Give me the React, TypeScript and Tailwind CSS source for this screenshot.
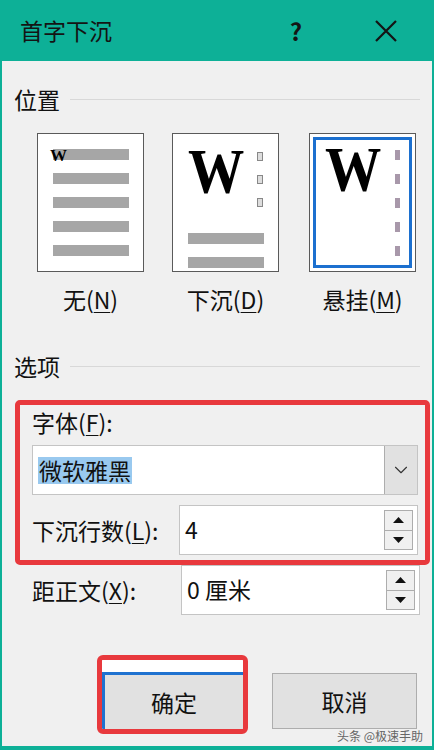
import { ChevronDown } from 'lucide-react';

const cjk = "font-['Noto_Sans_CJK_SC',sans-serif]";

function SectionHeader({ title }: { title: string }) {
  return (
    <div className="flex items-center h-[24px]">
      <span className="text-[23px] leading-[24px] text-[#111]">{title}</span>
      <div className="flex-1 h-px bg-[#d8d8d8] ml-[10px] mr-[12px]" />
    </div>
  );
}

function Bar({ className = '' }: { className?: string }) {
  return <div className={`h-[11px] w-[76px] bg-[#a6a6a6] ${className}`} />;
}

// big serif drop-cap drawn in the preview boxes
function BigW() {
  return (
    <div className="w-[56px] h-[44px] overflow-visible">
      <span className="block font-['Liberation_Serif',serif] font-bold text-[64px] leading-[40px] scale-x-[0.88] origin-left text-black">
        W
      </span>
    </div>
  );
}

function SpinButtons() {
  return (
    <div className="flex flex-col w-[29px] my-[4px] mr-[4px]">
      <div className="flex-1 border border-[#adadad] bg-[#f0f0f0] flex items-center justify-center">
        <svg width="11" height="6" viewBox="0 0 11 6">
          <path d="M0 6 L5.5 0 L11 6 Z" fill="#111" />
        </svg>
      </div>
      <div className="flex-1 border border-t-0 border-[#adadad] bg-[#f0f0f0] flex items-center justify-center">
        <svg width="11" height="6" viewBox="0 0 11 6">
          <path d="M0 0 L5.5 6 L11 0 Z" fill="#111" />
        </svg>
      </div>
    </div>
  );
}

function SpinBox({ value }: { value: string }) {
  return (
    <div className="w-[239px] h-[50px] bg-white border border-[#c4c4c4] flex">
      <div className="flex-1 pl-[5px] text-[23px] leading-[46px] text-[#111]">{value}</div>
      <SpinButtons />
    </div>
  );
}

function Underlined({ children }: { children: string }) {
  return <span className="underline underline-offset-[3px] decoration-1">{children}</span>;
}

export default function App() {
  return (
    <div className={`w-[434px] h-[750px] bg-[#0db097] flex flex-col px-[2px] pb-[4px] ${cjk}`}>
      {/* title bar */}
      <div className="h-[61px] flex items-center pl-[18px] text-[#141414]">
        <span className="text-[23px] leading-none">首字下沉</span>
        <span className="ml-auto mr-[72px] text-[24px] font-bold leading-none">?</span>
        <svg width="24" height="24" viewBox="0 0 24 24" className="mr-[34px]">
          <path d="M2 2 L22 22 M22 2 L2 22" stroke="#141414" strokeWidth="2.2" />
        </svg>
      </div>

      <div className="flex-1 bg-[#f0f0f0] flex flex-col pl-[12px] relative">
        <div className="mt-[26px]">
          <SectionHeader title="位置" />
        </div>

        {/* position choices */}
        <div className="flex gap-[28px] ml-[23px] mt-[22px]">
          <div className="w-[107px] h-[139px] border border-[#5a5a5a] bg-white flex flex-col gap-[13px] pt-[15px] pl-[15px]">
            <div className="relative">
              <Bar />
              <span className="absolute left-[-3px] top-[-2px] font-['Liberation_Serif',serif] font-bold text-[17px] leading-none text-black">
                W
              </span>
            </div>
            <Bar />
            <Bar />
            <Bar />
            <Bar />
          </div>

          <div className="w-[107px] h-[139px] border border-[#5a5a5a] bg-white flex flex-col pl-[15px] pt-[18px]">
            <div className="flex">
              <BigW />
              <div className="flex flex-col gap-[14px] ml-[13px] pt-[0px]">
                <div className="w-[6px] h-[9px] border border-[#888] bg-[#ddd]" />
                <div className="w-[6px] h-[9px] border border-[#888] bg-[#ddd]" />
                <div className="w-[6px] h-[9px] border border-[#888] bg-[#ddd]" />
              </div>
            </div>
            <Bar className="mt-[26px]" />
            <Bar className="mt-[13px]" />
          </div>

          <div className="w-[107px] h-[139px] border border-[#5a5a5a] bg-white p-[3px] ml-[2px]">
            <div className="w-full h-full border-[3px] border-[#1c70cf] flex pl-[9px] pt-[10px]">
              <BigW />
              <div className="flex flex-col gap-[14px] ml-[14px] pt-[0px]">
                <div className="w-[5px] h-[10px] bg-[#a898aa]" />
                <div className="w-[5px] h-[10px] bg-[#a898aa]" />
                <div className="w-[5px] h-[10px] bg-[#a898aa]" />
                <div className="w-[5px] h-[10px] bg-[#a898aa]" />
                <div className="w-[5px] h-[10px] bg-[#a898aa]" />
              </div>
            </div>
          </div>
        </div>

        <div className="flex ml-[23px] mt-[14px] text-[23px] leading-[26px] text-[#111]">
          <div className="w-[107px] text-center">
            无(<Underlined>N</Underlined>)
          </div>
          <div className="w-[107px] ml-[28px] text-center">
            下沉(<Underlined>D</Underlined>)
          </div>
          <div className="w-[107px] ml-[30px] text-center">
            悬挂(<Underlined>M</Underlined>)
          </div>
        </div>

        <div className="mt-[42px]">
          <SectionHeader title="选项" />
        </div>

        {/* highlighted font settings */}
        <div className="mt-[22px] ml-[1px] w-[415px] border-[5px] border-[#e8393d] rounded-[5px] flex flex-col pl-[12px] pr-[7px] pb-[5px]">
          <div className="mt-[5px] h-[24px] text-[23px] leading-[24px] text-[#111]">
            字体(<Underlined>F</Underlined>):
          </div>
          <div className="mt-[11px] h-[50px] bg-white border border-[#c4c4c4] flex">
            <div className="flex-1 flex items-center pl-[5px]">
              <span className="bg-[#99c9ef] text-[23px] leading-[27px] px-px text-[#111]">微软雅黑</span>
            </div>
            <div className="w-[33px] bg-[#e1e1e1] border-l border-[#adadad] flex items-center justify-center">
              <ChevronDown size={22} strokeWidth={1.2} color="#333" />
            </div>
          </div>
          <div className="mt-[10px] flex items-center">
            <span className="text-[23px] leading-[24px] text-[#111]">
              下沉行数(<Underlined>L</Underlined>):
            </span>
            <div className="ml-auto">
              <SpinBox value="4" />
            </div>
          </div>
        </div>

        <div className="flex items-center pl-[18px] pr-[12px]">
          <span className="text-[23px] leading-[24px] text-[#111]">
            距正文(<Underlined>X</Underlined>):
          </span>
          <div className="ml-auto">
            <SpinBox value="0 厘米" />
          </div>
        </div>

        {/* buttons */}
        <div className="flex items-start mt-[40px] ml-[83px]">
          <div className="w-[151px] h-[79px] border-[5px] border-[#e8393d] rounded-[6px] flex flex-col overflow-hidden">
            <div className="h-[12px] bg-white" />
            <div className="flex-1 bg-[#e1e1e1] border-t-[3px] border-l-[3px] border-[#1f72d0] flex items-center justify-center text-[23px] text-[#111]">
              确定
            </div>
          </div>
          <div className="w-[145px] h-[56px] mt-[18px] ml-[24px] bg-[#e1e1e1] border border-[#adadad] flex items-center justify-center text-[23px] text-[#111]">
            取消
          </div>
        </div>

        <div className="absolute right-[9px] bottom-[4px] text-[12px] leading-none text-[#666]">
          头条 @极速手助
        </div>
      </div>
    </div>
  );
}
